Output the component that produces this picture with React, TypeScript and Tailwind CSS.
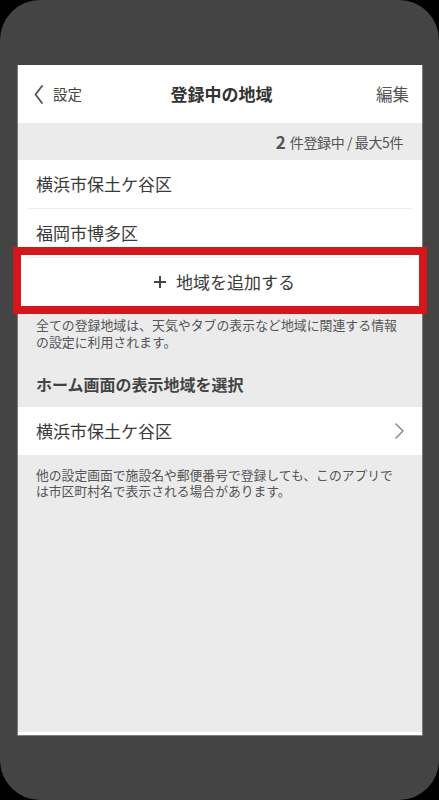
import { type ReactNode } from 'react'

const FONT = { fontFamily: '"Noto Sans CJK JP", "Noto Sans", sans-serif' }

function Divider() {
  return <div className="mx-[9px] h-px bg-[#ececec]" />
}

function Row({ children }: { children: ReactNode }) {
  return (
    <div className="flex h-[48px] items-center px-[18px] text-[17px] text-[#3a3a3a]">{children}</div>
  )
}

export default function App() {
  return (
    <div className="h-[800px] w-[439px] bg-black" style={FONT}>
      <div className="h-full w-full rounded-[40px] bg-[#444444] pt-[65px] pl-[17px]">
        <div className="relative flex h-[671px] w-[406px] flex-col border-x border-b border-[#7c7c7c] bg-[#ebebeb]">
          {/* Nav bar */}
          <header className="flex h-[58px] items-center justify-between bg-white pr-[13px] pl-[16px]">
            <div className="flex w-[90px] items-center gap-[10px] text-[14.5px] text-[#444]">
              <svg width="9" height="19" viewBox="0 0 9 19" fill="none">
                <path d="M8 1 L1.5 9.5 L8 18" stroke="#555" strokeWidth="1.8" strokeLinecap="round" strokeLinejoin="round" />
              </svg>
              <span>設定</span>
            </div>
            <h1 className="text-[17px] font-bold text-[#333]">登録中の地域</h1>
            <div className="w-[90px] text-right text-[16.5px] text-[#555]">編集</div>
          </header>

          {/* Count */}
          <div className="flex h-[37px] items-center justify-end gap-[4px] pr-[19px] text-[#555]">
            <span className="text-[17px] font-bold leading-none">2</span>
            <span className="text-[14px] leading-none tracking-[-0.4px]">件登録中 / 最大5件</span>
          </div>

          {/* Registered list */}
          <div className="bg-white">
            <Row>横浜市保土ケ谷区</Row>
            <Divider />
            <Row>福岡市博多区</Row>
            <Divider />
            <div className="flex h-[48px] items-center justify-center gap-[10px] pl-[9px] text-[17px] text-[#3a3a3a]">
              <svg width="12" height="12" viewBox="0 0 12 12">
                <path d="M6 0 V12 M0 6 H12" stroke="#444" strokeWidth="2" />
              </svg>
              <span>地域を追加する</span>
            </div>
          </div>

          <p className="pt-[10px] pr-[20px] pl-[18px] text-[12.9px] leading-[17px] text-[#555]">
            全ての登録地域は、天気やタブの表示など地域に関連する情報の設定に利用されます。
          </p>

          <h2 className="px-[18px] pt-[23px] pb-[12px] text-[16px] leading-[22px] font-bold text-[#444]">
            ホーム画面の表示地域を選択
          </h2>

          <div className="flex h-[48px] items-center justify-between bg-white pr-[18px] pl-[18px] text-[17px] text-[#3a3a3a]">
            <span>横浜市保土ケ谷区</span>
            <svg width="9" height="16" viewBox="0 0 9 16" fill="none">
              <path d="M1 1 L8 8 L1 15" stroke="#8a8a8a" strokeWidth="1.5" strokeLinecap="round" strokeLinejoin="round" />
            </svg>
          </div>

          <p className="pt-[12px] pr-[20px] pl-[18px] text-[12.8px] leading-[16px] text-[#555]">
            他の設定画面で施設名や郵便番号で登録しても、このアプリでは市区町村名で表示される場合があります。
          </p>

          <div className="mt-auto h-[3px] bg-white" />

          {/* Highlight */}
          <div className="absolute top-[182px] left-[-5px] h-[67px] w-[414px] border-[8px] border-[#d5161b]" />
        </div>
      </div>
    </div>
  )
}
